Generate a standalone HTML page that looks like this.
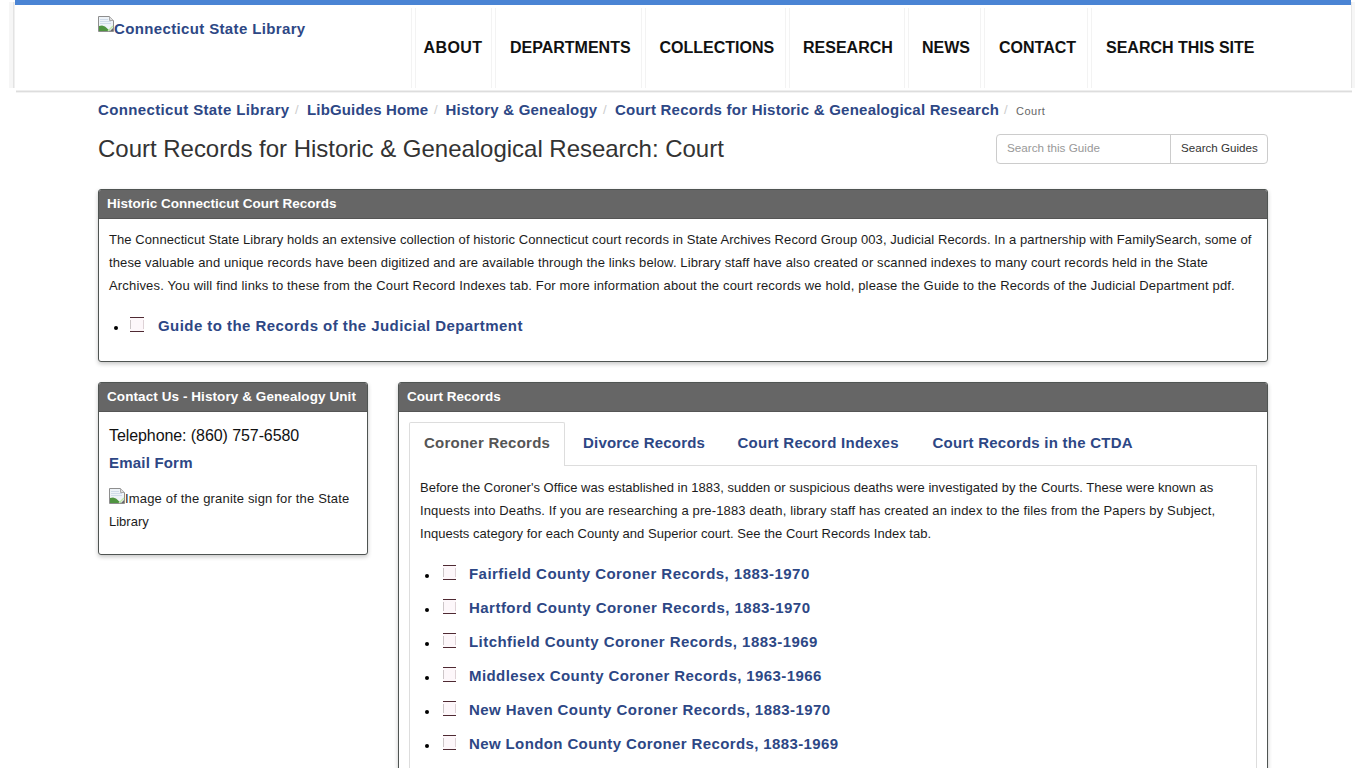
<!DOCTYPE html>
<html><head><meta charset="utf-8"><title>Court Records for Historic &amp; Genealogical Research: Court</title>
<style>
html,body{margin:0;padding:0;background:#fff;width:1366px;height:768px;overflow:hidden;position:relative;font-family:"Liberation Sans",sans-serif;color:#222}
.a{position:absolute;white-space:nowrap}
.lk{color:#2d4785;font-weight:bold}
#hdr{position:absolute;left:15px;top:0;width:1336px;height:83px;border-top:5px solid #4a84d4;background:#fff}
.sh{position:absolute}
.sep{position:absolute;top:8px;width:1px;height:80px;background:#f3f3f3}
.nav{font-size:16px;font-weight:bold;line-height:20px;top:38px;color:#111}
.bc{font-size:15px;line-height:20px;top:100px}
.bsl{color:#ccc;font-size:13px;line-height:20px;top:100px}
.panel{position:absolute;border:1px solid #4f5452;border-radius:3px;background:#fff;box-shadow:0 2px 4px rgba(0,0,0,.22);overflow:hidden}
.ph{position:absolute;left:0;top:0;right:0;height:28px;background:#666;border-bottom:1px solid #555}
.pht{position:absolute;color:#fff;font-weight:bold;font-size:13.5px;line-height:20px}
.txt{font-size:13px;line-height:23px;color:#1c1c1c}
.bul{position:absolute;width:4.4px;height:4.4px;border-radius:50%;background:#000}
.tofu{position:absolute;width:13px;height:13px;border-top:1px solid #4f2a33;border-bottom:1px solid #4f2a33;background:#fdf7fa}
.tofu:before{content:"";position:absolute;left:0;top:2px;width:1px;height:9px;background:#cdc6c8}
.tofu:after{content:"";position:absolute;right:0;top:2px;width:1px;height:9px;background:#ded2d6}
.li{font-size:15px;line-height:20px}
.broken{position:absolute;width:16px;height:16px}
</style></head><body>
<div id="hdr"></div>
<div class="sh" style="left:9px;top:2px;width:4px;height:86px;background:#f6f6f6"></div>
<div class="sh" style="left:13px;top:2px;width:1px;height:86px;background:#e3e3e3"></div>
<div class="sh" style="left:14px;top:2px;width:1px;height:86px;background:#f0f0f0"></div>
<div class="sh" style="left:1351px;top:2px;width:1px;height:86px;background:#e6e6e6"></div>
<div class="sh" style="left:1352px;top:2px;width:3px;height:86px;background:#f6f6f6"></div>
<div class="sh" style="left:16px;top:90px;width:1336px;height:1px;background:#eeeeee"></div>
<div class="sh" style="left:16px;top:91px;width:1336px;height:1px;background:#dddddd"></div>
<div class="sh" style="left:16px;top:92px;width:1336px;height:1px;background:#f2f2f2"></div>
<!-- logo -->
<svg class="broken" style="left:98px;top:16px" width="16" height="16" viewBox="0 0 16 16"><path d="M0.5 0.5H11.5L15.5 4.5V15.5H0.5Z" fill="#eef3f8" stroke="#8e8e8e"/><path d="M11.5 0.5V4.5H15.5" fill="#ddd" stroke="#aaa"/><path d="M2 3.5H10M2 5.5H13M2 7.5H13" stroke="#d0dcea"/><path d="M1 15V10L4 9.5L7 10.5L12 15Z" fill="#4f9440"/><path d="M10 15L15 10" stroke="#bfe8a8" stroke-width="1.2"/><path d="M12 15L15 12V15Z" fill="#6a6a6a"/></svg>
<div class="a lk" style="left:114px;top:19px;font-size:15px;line-height:20px;letter-spacing:0.36px">Connecticut State Library</div>
<!-- nav separators -->
<div class="sep" style="left:411px"></div><div class="sep" style="left:415px"></div>
<div class="sep" style="left:491px"></div><div class="sep" style="left:495px"></div>
<div class="sep" style="left:641px"></div><div class="sep" style="left:645px"></div>
<div class="sep" style="left:785px"></div><div class="sep" style="left:789px"></div>
<div class="sep" style="left:904px"></div><div class="sep" style="left:908px"></div>
<div class="sep" style="left:980px"></div><div class="sep" style="left:984px"></div>
<div class="sep" style="left:1087px"></div><div class="sep" style="left:1091px"></div>
<div class="a nav" style="left:423.5px;letter-spacing:0.4px">ABOUT</div>
<div class="a nav" style="left:510px">DEPARTMENTS</div>
<div class="a nav" style="left:659.5px">COLLECTIONS</div>
<div class="a nav" style="left:803px">RESEARCH</div>
<div class="a nav" style="left:922px">NEWS</div>
<div class="a nav" style="left:999px">CONTACT</div>
<div class="a nav" style="left:1106px">SEARCH THIS SITE</div>

<!-- breadcrumb -->
<div class="a bc lk" style="left:98px;letter-spacing:0.36px">Connecticut State Library</div>
<div class="a bsl" style="left:295px">/</div>
<div class="a bc lk" style="left:307px;letter-spacing:0.15px">LibGuides Home</div>
<div class="a bsl" style="left:434px">/</div>
<div class="a bc lk" style="left:445.5px;letter-spacing:0.23px">History &amp; Genealogy</div>
<div class="a bsl" style="left:603px">/</div>
<div class="a bc lk" style="left:615px;letter-spacing:0.23px">Court Records for Historic &amp; Genealogical Research</div>
<div class="a bsl" style="left:1004px">/</div>
<div class="a" style="left:1016px;top:101px;font-size:11px;line-height:20px;color:#666;letter-spacing:0.5px">Court</div>

<!-- title -->
<div class="a" style="left:98px;top:134px;font-size:24px;line-height:30px;color:#333;letter-spacing:-0.02px">Court Records for Historic &amp; Genealogical Research: Court</div>

<!-- search -->
<div style="position:absolute;left:996px;top:134px;width:272px;height:30px;box-sizing:border-box;border:1px solid #ccc;border-radius:4px;background:#fff"></div>
<div style="position:absolute;left:1170px;top:134px;width:1px;height:30px;background:#ccc"></div>
<div class="a" style="left:1007px;top:140px;font-size:11.7px;line-height:15px;color:#999">Search this Guide</div>
<div class="a" style="left:1181px;top:140px;font-size:11.6px;line-height:15px;color:#333">Search Guides</div>

<!-- panel 1 -->
<div class="panel" style="left:98px;top:189px;width:1168px;height:171px">
 <div class="ph"></div>
</div>
<div class="a pht" style="left:107px;top:194px">Historic Connecticut Court Records</div>
<div class="a txt" style="left:109px;top:228px;letter-spacing:0.082px">The Connecticut State Library holds an extensive collection of historic Connecticut court records in State Archives Record Group 003, Judicial Records. In a partnership with FamilySearch, some of</div>
<div class="a txt" style="left:109px;top:251px;letter-spacing:0.116px">these valuable and unique records have been digitized and are available through the links below. Library staff have also created or scanned indexes to many court records held in the State</div>
<div class="a txt" style="left:109px;top:274px;letter-spacing:0.163px">Archives. You will find links to these from the Court Record Indexes tab. For more information about the court records we hold, please the Guide to the Records of the Judicial Department pdf.</div>
<div class="bul" style="left:113.8px;top:325.7px"></div>
<div class="tofu" style="left:130px;top:317px;width:14px"></div>
<div class="a li lk" style="left:158px;top:316px;letter-spacing:0.44px">Guide to the Records of the Judicial Department</div>

<!-- panel 2 -->
<div class="panel" style="left:98px;top:382px;width:268px;height:171px">
 <div class="ph"></div>
</div>
<div class="a pht" style="left:107px;top:387px;letter-spacing:0.08px">Contact Us - History &amp; Genealogy Unit</div>
<div class="a" style="left:109px;top:426px;font-size:16px;line-height:20px;color:#111;letter-spacing:-0.08px">Telephone: (860) 757-6580</div>
<div class="a li lk" style="left:109px;top:453px;letter-spacing:0.2px">Email Form</div>
<svg class="broken" style="left:109px;top:488px" width="16" height="16" viewBox="0 0 16 16"><path d="M0.5 0.5H11.5L15.5 4.5V15.5H0.5Z" fill="#eef3f8" stroke="#8e8e8e"/><path d="M11.5 0.5V4.5H15.5" fill="#ddd" stroke="#aaa"/><path d="M2 3.5H10M2 5.5H13M2 7.5H13" stroke="#d0dcea"/><path d="M1 15V10L4 9.5L7 10.5L12 15Z" fill="#4f9440"/><path d="M10 15L15 10" stroke="#bfe8a8" stroke-width="1.2"/><path d="M12 15L15 12V15Z" fill="#6a6a6a"/></svg>
<div class="a txt" style="left:125px;top:487px;letter-spacing:0.176px">Image of the granite sign for the State</div>
<div class="a txt" style="left:109px;top:510px">Library</div>

<!-- panel 3 -->
<div class="panel" style="left:398px;top:382px;width:868px;height:420px">
 <div class="ph"></div>
</div>
<div class="a pht" style="left:407px;top:387px">Court Records</div>
<!-- tabs -->
<div style="position:absolute;left:409px;top:465px;width:848px;height:1px;background:#ddd"></div>
<div style="position:absolute;left:409px;top:422px;width:156px;height:44px;box-sizing:border-box;border:1px solid #ddd;border-bottom:0;border-radius:2px 2px 0 0;background:#fff"></div>
<div style="position:absolute;left:409px;top:466px;width:848px;height:400px;box-sizing:border-box;border:1px solid #ddd;border-top:0"></div>
<div class="a li" style="left:424px;top:433px;font-weight:bold;color:#555;letter-spacing:0.24px">Coroner Records</div>
<div class="a li lk" style="left:583px;top:433px;letter-spacing:0.19px">Divorce Records</div>
<div class="a li lk" style="left:737.5px;top:433px;letter-spacing:0.27px">Court Record Indexes</div>
<div class="a li lk" style="left:932.5px;top:433px;letter-spacing:0.25px">Court Records in the CTDA</div>
<div class="a txt" style="left:420px;top:476px;letter-spacing:0.021px">Before the Coroner's Office was established in 1883, sudden or suspicious deaths were investigated by the Courts. These were known as</div>
<div class="a txt" style="left:420px;top:499px;letter-spacing:0.14px">Inquests into Deaths. If you are researching a pre-1883 death, library staff has created an index to the files from the Papers by Subject,</div>
<div class="a txt" style="left:420px;top:522px;letter-spacing:0.028px">Inquests category for each County and Superior court. See the Court Records Index tab.</div>

<div class="bul" style="left:424.7px;top:573.8px"></div><div class="tofu" style="left:443px;top:565px"></div>
<div class="a li lk" style="left:469px;top:564px;letter-spacing:0.46px">Fairfield County Coroner Records, 1883-1970</div>
<div class="bul" style="left:424.7px;top:607.8px"></div><div class="tofu" style="left:443px;top:599px"></div>
<div class="a li lk" style="left:469px;top:598px;letter-spacing:0.47px">Hartford County Coroner Records, 1883-1970</div>
<div class="bul" style="left:424.7px;top:641.8px"></div><div class="tofu" style="left:443px;top:633px"></div>
<div class="a li lk" style="left:469px;top:632px;letter-spacing:0.445px">Litchfield County Coroner Records, 1883-1969</div>
<div class="bul" style="left:424.7px;top:675.8px"></div><div class="tofu" style="left:443px;top:667px"></div>
<div class="a li lk" style="left:469px;top:666px;letter-spacing:0.41px">Middlesex County Coroner Records, 1963-1966</div>
<div class="bul" style="left:424.7px;top:709.8px"></div><div class="tofu" style="left:443px;top:701px"></div>
<div class="a li lk" style="left:469px;top:700px;letter-spacing:0.44px">New Haven County Coroner Records, 1883-1970</div>
<div class="bul" style="left:424.7px;top:743.8px"></div><div class="tofu" style="left:443px;top:735px"></div>
<div class="a li lk" style="left:469px;top:734px;letter-spacing:0.385px">New London County Coroner Records, 1883-1969</div>
</body></html>
